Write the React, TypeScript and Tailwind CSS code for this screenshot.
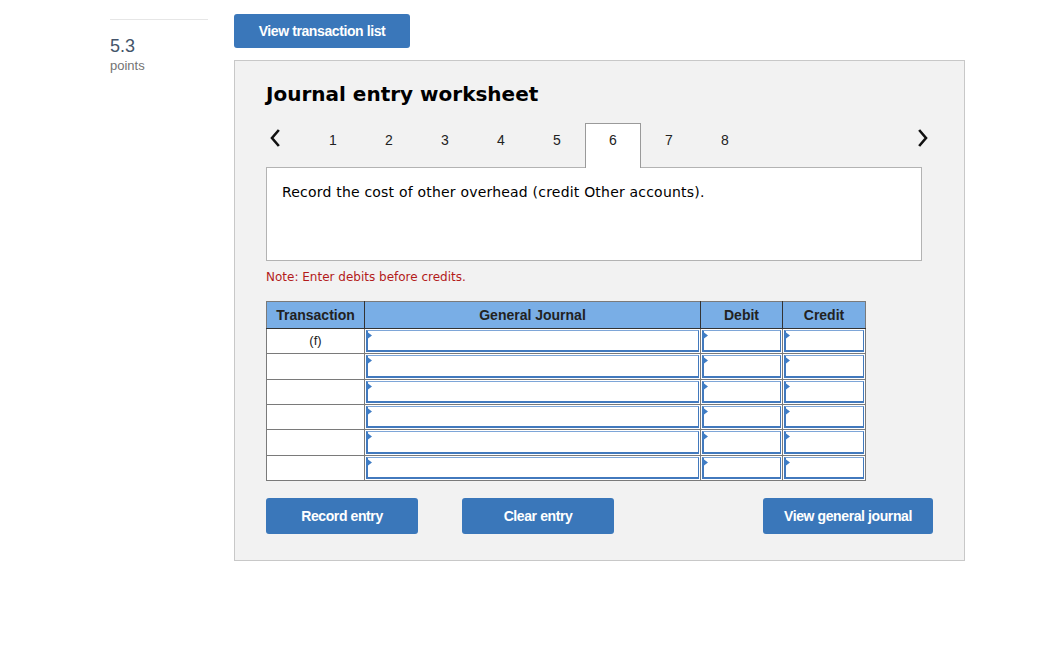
import React from "react";

const tabs = [1, 2, 3, 4, 5, 6, 7, 8];
const active = 6;
const rows = [
  { label: "(f)", h: "h-[25px]" },
  { label: "", h: "h-[26px]" },
  { label: "", h: "h-[25px]" },
  { label: "", h: "h-[25px]" },
  { label: "", h: "h-[26px]" },
  { label: "", h: "h-[25px]" },
];

function Chevron({ dir }: { dir: "left" | "right" }) {
  return (
    <svg width="12" height="18" viewBox="0 0 12 18" className="block">
      <polyline
        points={dir === "left" ? "9,2 3,9 9,16" : "3,2 9,9 3,16"}
        fill="none"
        stroke="#111"
        strokeWidth="2.6"
        strokeLinecap="square"
      />
    </svg>
  );
}

function EntryInput() {
  return (
    <div className="relative h-full min-h-[21px] border border-l-2 border-b-2 border-[#4279bd] border-t-[#7ea6d8] bg-white">
      <svg width="6" height="9" viewBox="0 0 6 9" className="absolute -left-[2px] top-0">
        <polygon points="0,0 6,4.5 0,9" fill="#3f7cc4" />
      </svg>
    </div>
  );
}

function BlueButton({ label, width }: { label: string; width: string }) {
  return (
    <button
      className={`${width} h-[36px] rounded-[3px] bg-[#3a77ba] text-[14px] font-bold tracking-[-0.4px] text-white`}
    >
      {label}
    </button>
  );
}

export default function App() {
  return (
    <div className="min-h-screen bg-white font-['Liberation_Sans',Arial,sans-serif]">
      <div className="flex">
        {/* Score */}
        <div className="ml-[110px] w-[98px] pt-[19px]">
          <div className="border-t border-[#e6e6e6]" />
          <div className="mt-[16px] text-[18px] leading-[20px] text-[#44546a]">5.3</div>
          <div className="mt-[2px] text-[13px] leading-[16px] text-[#737373]">points</div>
        </div>

        {/* Main */}
        <div className="ml-[26px] pt-[14px]">
          <button className="h-[34px] w-[176px] rounded-[3px] bg-[#3a77ba] text-[14px] font-bold tracking-[-0.4px] text-white">
            View transaction list
          </button>

          <div className="mt-[12px] h-[501px] w-[731px] border border-[#c8c8c8] bg-[#f2f2f2] pl-[31px] pt-[19px]">
            <h2 className="font-['DejaVu_Sans',Verdana,sans-serif] text-[20px] font-bold leading-[28px] text-black">
              Journal entry worksheet
            </h2>

            {/* Tabs */}
            <div className="mt-[15px] flex h-[44px] w-[663px] items-start">
              <div className="flex h-[44px] w-[39px] items-start pl-[3px] pt-[6px]">
                <Chevron dir="left" />
              </div>
              {tabs.map((t) => (
                <div
                  key={t}
                  className={
                    t === active
                      ? "relative z-10 flex h-[45px] w-[56px] justify-center border border-b-0 border-[#9a9a9a] bg-white pt-[6px] text-[14px] text-[#222]"
                      : "flex h-[44px] w-[56px] justify-center pt-[7px] text-[14px] text-[#222]"
                  }
                >
                  {t}
                </div>
              ))}
              <div className="ml-auto flex pt-[6px]">
                <Chevron dir="right" />
              </div>
            </div>

            {/* Description */}
            <div className="h-[94px] w-[656px] border border-[#b3b3b3] bg-white px-[15px] pt-[14px] font-['DejaVu_Sans',Verdana,sans-serif] text-[14px] leading-[20px] tracking-[0.2px] text-black">
              Record the cost of other overhead (credit Other accounts).
            </div>

            <p className="mt-[8px] font-['DejaVu_Sans',Verdana,sans-serif] text-[12px] leading-[16px] text-[#b31b1b]">
              Note: Enter debits before credits.
            </p>

            {/* Journal table */}
            <table className="mt-[16px] w-[599px] table-fixed border-collapse">
              <colgroup>
                <col className="w-[98px]" />
                <col className="w-[336px]" />
                <col className="w-[82px]" />
                <col className="w-[83px]" />
              </colgroup>
              <thead>
                <tr className="h-[27px] bg-[#79aee6] text-[14px] font-bold text-[#222]">
                  <th className="border border-[#333] border-l-[#7a7a7a] border-t-[#7a7a7a] font-bold">Transaction</th>
                  <th className="border border-[#333] border-t-[#7a7a7a] font-bold">General Journal</th>
                  <th className="border border-[#333] border-t-[#7a7a7a] font-bold">Debit</th>
                  <th className="border border-[#333] border-r-[#7a7a7a] border-t-[#7a7a7a] font-bold">Credit</th>
                </tr>
              </thead>
              <tbody>
                {rows.map((r, i) => (
                  <tr key={i} className={`${r.h} bg-white`}>
                    <td className="border border-[#7a7a7a] pb-[1px] text-center align-middle text-[13px] text-[#222]">
                      {r.label}
                    </td>
                    <td className="h-[inherit] border border-[#7a7a7a] p-px">
                      <EntryInput />
                    </td>
                    <td className="h-[inherit] border border-[#7a7a7a] p-px">
                      <EntryInput />
                    </td>
                    <td className="h-[inherit] border border-[#7a7a7a] p-px">
                      <EntryInput />
                    </td>
                  </tr>
                ))}
              </tbody>
            </table>

            {/* Actions */}
            <div className="mt-[17px] flex w-[667px]">
              <BlueButton label="Record entry" width="w-[152px]" />
              <div className="ml-[44px]">
                <BlueButton label="Clear entry" width="w-[152px]" />
              </div>
              <div className="ml-auto">
                <BlueButton label="View general journal" width="w-[170px]" />
              </div>
            </div>
          </div>
        </div>
      </div>
    </div>
  );
}
